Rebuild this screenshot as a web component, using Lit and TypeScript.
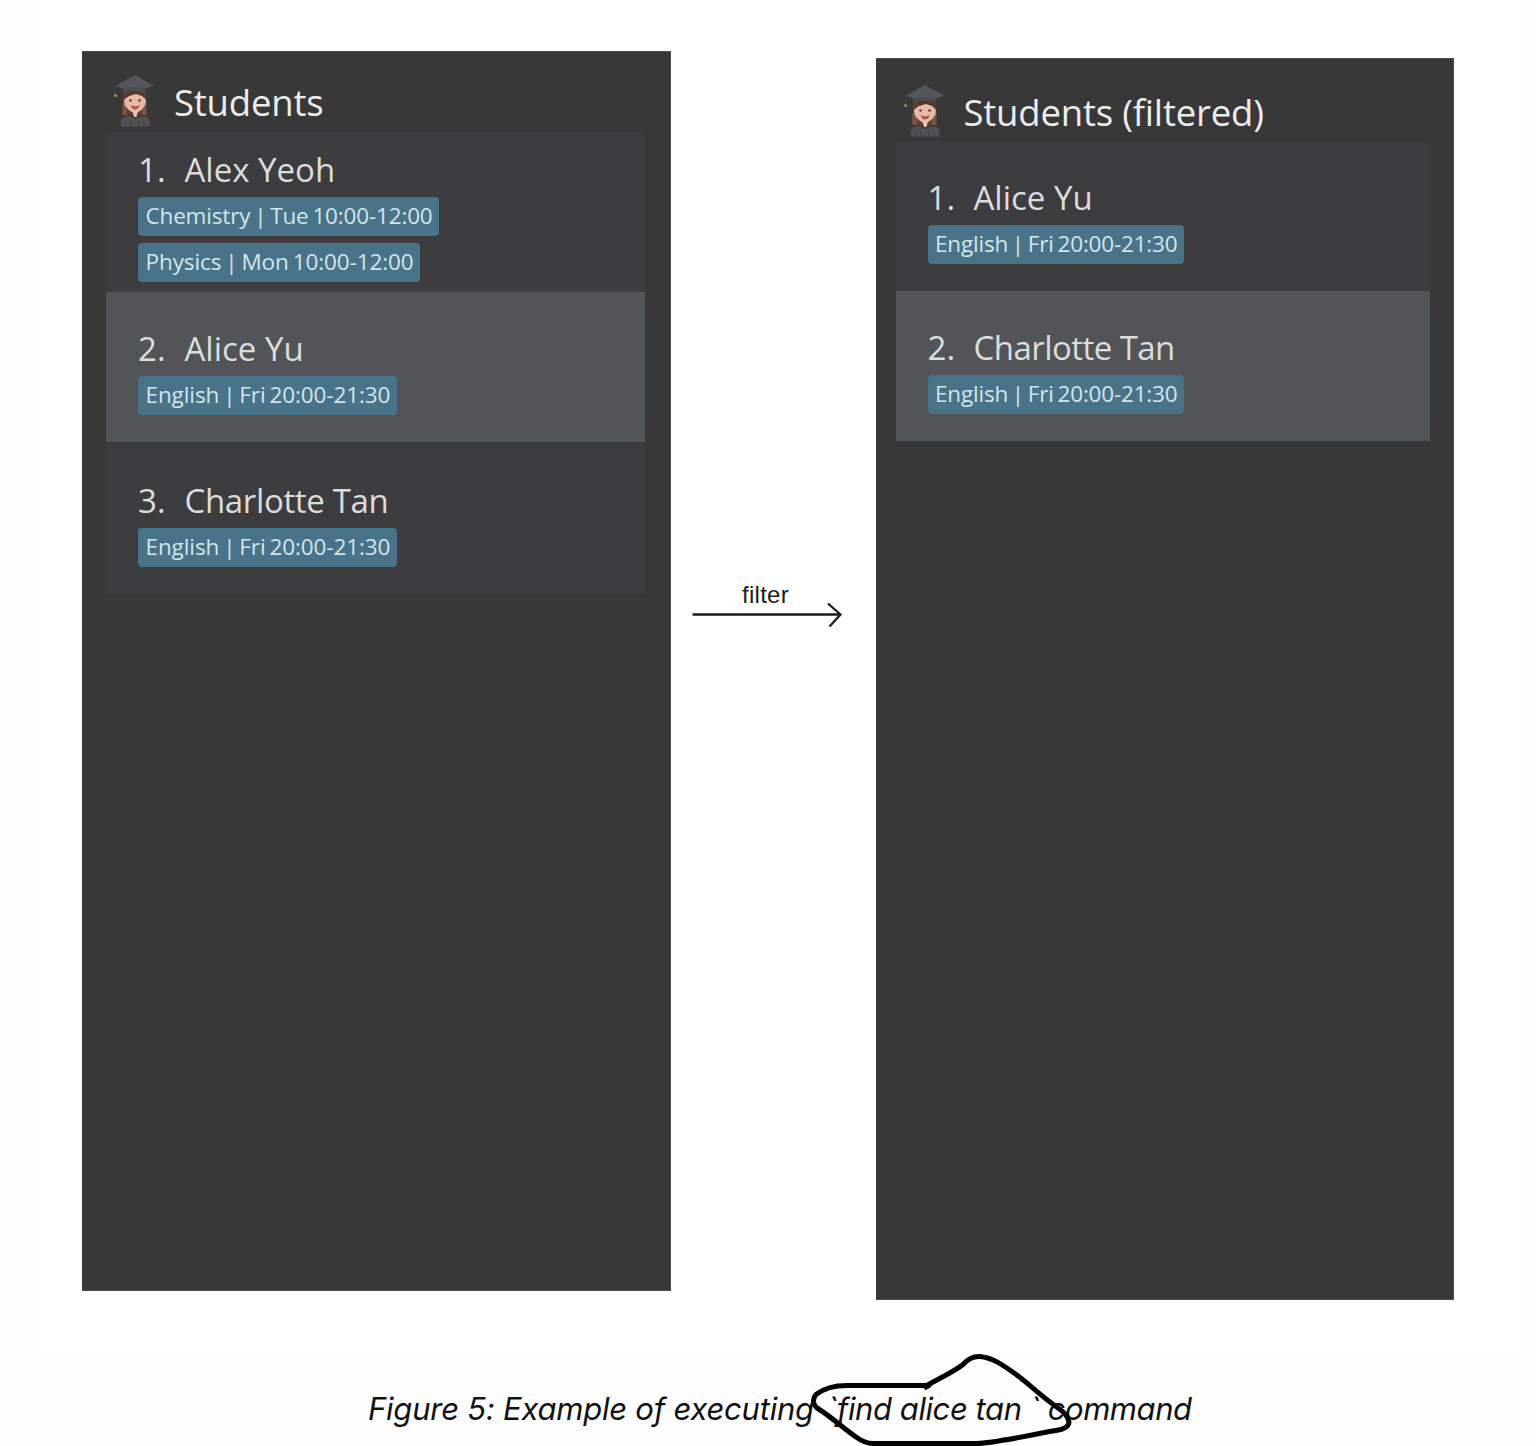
import { LitElement, html, css, svg } from "lit";
import { customElement, property } from "lit/decorators.js";
import { classMap } from "lit/directives/class-map.js";

interface Student {
  name: string;
  tags: string[];
}

const ENGLISH = "English | Fri 20:00-21:30";

const ALL: Student[] = [
  { name: "Alex Yeoh", tags: ["Chemistry | Tue 10:00-12:00", "Physics | Mon 10:00-12:00"] },
  { name: "Alice Yu", tags: [ENGLISH] },
  { name: "Charlotte Tan", tags: [ENGLISH] },
];

const graduate = svg`
  <path d="M11 18 L34 18 L34.500 41 L10.500 41 Z" fill="#5d4135"/>
  <path d="M10.500 29 L15 31 L15 41 L10.500 41 Z M30 31 L34.500 28 L34.500 41 L30 41 Z" fill="#7a5644"/>
  <path d="M12.500 22 Q23 15 32.500 22 L34 27 Q34 31 31 34 Q28 38 23 39 Q18 38 15 34 Q12 31 12 27 Z" fill="#e6baa6"/>
  <path d="M11.500 26 L13 18 L33 18 L34.500 26 L30 22 L24 20 L17 22 Z" fill="#59392f"/>
  <path d="M20.500 37 L26 37 L24.500 43 L22 43 Z" fill="#e6c5b4"/>
  <circle cx="18.500" cy="26.500" r="1.300" fill="#5a3a33"/>
  <circle cx="27.500" cy="26.500" r="1.300" fill="#5a3a33"/>
  <path d="M18.500 31 Q23 33.500 28 31 Q26.500 35.500 23 35.500 Q20 35.500 18.500 31 Z" fill="#a8574d"/>
  <path d="M12 12 L33 12 L34 19 Q23 15 11 19 Z" fill="#4b4d50"/>
  <path d="M4 11.500 L23 1 L42 11.500 L33 15 Q23 11 12 15 Z" fill="#53565a"/>
  <path d="M4.500 12 L4 20" stroke="#43433f" stroke-width="1" fill="none"/>
  <circle cx="3.500" cy="21.500" r="1.600" fill="#a58b50"/>
  <path d="M8.500 52.500 L9 46 Q11 42 18 42 L23 45 L29 42 Q36 42 37 46 L37.500 52.500 Z" fill="#505255"/>
  <path d="M14 52.500 V48 M19 52.500 V47 M27 52.500 V47 M32 52.500 V48" stroke="#424446" stroke-width="1.300"/>
`;

@customElement("student-panel")
class StudentPanel extends LitElement {
  @property() heading = "";
  @property({ type: Boolean, reflect: true }) filtered = false;
  @property({ attribute: false }) students: Student[] = [];

  static styles = css`
    :host {
      display: flex;
      flex-direction: column;
      box-sizing: border-box;
      width: 588.5px;
      height: 1240px;
      padding: 22px 24.5px 0 24px;
      background: #383838;
      border: 1px solid #4c4c4c;
      border-width: 1px 1px 1px 0;
      font-family: "Open Sans", "Noto Sans", sans-serif;
    }
    :host([filtered]) {
      width: 578.5px;
      height: 1242px;
      padding: 25px 23px 0 20px;
    }
    .head {
      display: flex;
      height: 58px;
      flex: none;
    }
    :host([filtered]) .head {
      height: 57px;
    }
    .icon {
      width: 46px;
      height: 54px;
      margin-left: 6px;
      flex: none;
    }
    .title {
      margin-left: 16px;
      line-height: 56px;
      font-size: 36.5px;
      letter-spacing: -0.2px;
      color: #ededed;
      white-space: nowrap;
    }
    .row {
      box-sizing: border-box;
      display: flex;
      flex-direction: column;
      justify-content: flex-end;
      align-items: flex-start;
      height: 150px;
      padding: 0 0 27px 32px;
      background: #3d3d40;
    }
    .row.even {
      background: #515558;
    }
    .row.tall {
      height: 160px;
      padding-bottom: 10px;
    }
    .row.last {
      height: 152px;
    }
    .name {
      display: flex;
      line-height: 44px;
      padding-bottom: 5px;
      font-size: 33px;
      color: #dcdcdd;
      white-space: nowrap;
    }
    .num {
      width: 46.5px;
    }
    .long {
      letter-spacing: -0.35px;
    }
    :host([filtered]) .long {
      letter-spacing: -0.55px;
    }
    :host([filtered]) .num {
      width: 46px;
    }
    .tags {
      display: flex;
      flex-direction: column;
      align-items: flex-start;
      gap: 7px;
    }
    .tag {
      height: 39px;
      line-height: 37px;
      padding: 0 6.500px 0 7.500px;
      border-radius: 4px;
      background: #497388;
      color: #d3e5ec;
      font-size: 22.5px;
      letter-spacing: -0.1px;
      word-spacing: -1.8px;
      white-space: nowrap;
    }
    .tag.wide {
      letter-spacing: -0.17px;
    }
    :host([filtered]) .tag {
      letter-spacing: -0.2px;
    }
  `;

  render() {
    return html`
      <div class="head">
        <svg class="icon" viewBox="0 0 46 54">${graduate}</svg>
        <div class="title">${this.heading}</div>
      </div>
      ${this.students.map(
        (s, i) => html`
          <div class=${classMap({ row: true, even: i % 2 === 1, tall: s.tags.length > 1, last: i === 2 })}>
            <div class="name">
              <span class="num">${i + 1}.</span>
              <span class=${s.name.length > 10 ? "long" : ""}>${s.name}</span>
            </div>
            <div class="tags">
              ${s.tags.map((t) => html`<span class=${classMap({ tag: true, wide: t.length > 26 })}>${t}</span>`)}
            </div>
          </div>
        `
      )}
    `;
  }
}

@customElement("app-root")
class AppRoot extends LitElement {
  static styles = css`
    :host {
      display: block;
      height: 1446px;
      overflow: hidden;
      background: #fdfdfd;
    }
    .figure {
      display: flex;
      align-items: flex-start;
      box-sizing: border-box;
      height: 1353px;
      margin: 0 16px 0 40px;
      padding: 51px 0 0 42px;
      background: #fff;
    }
    .step {
      width: 205px;
      padding-top: 530px;
      display: flex;
      flex-direction: column;
      align-items: center;
      font: 24px/28px "Liberation Sans", Arial, sans-serif;
      color: #1c1c1c;
    }
    .step span {
      margin-right: 15px;
      letter-spacing: 0.25px;
    }
    .arrow {
      display: block;
      width: 153px;
      height: 30px;
      margin: -9px 12px 0 0;
    }
    .second {
      margin-top: 7px;
    }
    .caption {
      position: relative;
      height: 93px;
      padding-left: 368px;
      font: italic 31px/112px Inter, sans-serif;
      letter-spacing: -0.23px;
      color: #111;
      white-space: pre;
    }
    .command {
      margin-left: 5px;
      letter-spacing: -0.43px;
    }
    .loop {
      position: absolute;
      left: 800px;
      top: -3px;
      width: 280px;
      height: 96px;
    }
  `;

  render() {
    return html`
      <div class="figure">
        <student-panel heading="Students" .students=${ALL}></student-panel>
        <div class="step">
          <span>filter</span>
          <svg class="arrow" viewBox="0 0 153 30" fill="none" stroke="#1c1c1c" stroke-width="2.300">
            <path d="M1.500 14.500 H149 M137 3.500 L149.500 14.500 L138.500 26.500" />
          </svg>
        </div>
        <student-panel
          class="second"
          filtered
          heading="Students (filtered)"
          .students=${ALL.slice(1)}
        ></student-panel>
      </div>
      <div class="caption">Figure 5: Example of executing <span class="command">\`find alice tan \` command</span
        ><svg class="loop" viewBox="800 1350 280 96" fill="none" stroke="#000" stroke-width="5" stroke-linejoin="round">
          <path
            d="M924 1388 L929 1385.500 H847 C834 1385.500 823 1389 816 1394.500 C812 1399 813 1404 817 1408 C829 1415 843 1428 856 1437 Q865 1443.500 873 1443.500 H977 C992 1443.500 1030 1435 1061 1429.500 Q1069 1427 1069 1422 C1068 1416 1064 1412 1058 1408 C1042 1397 1028 1383 1014 1373 C1003 1365 992 1357.500 980 1356.500 C972 1356 967 1360 963 1364.500 C955 1371 942 1377 925 1386.500"
          />
        </svg>
      </div>
    `;
  }
}
